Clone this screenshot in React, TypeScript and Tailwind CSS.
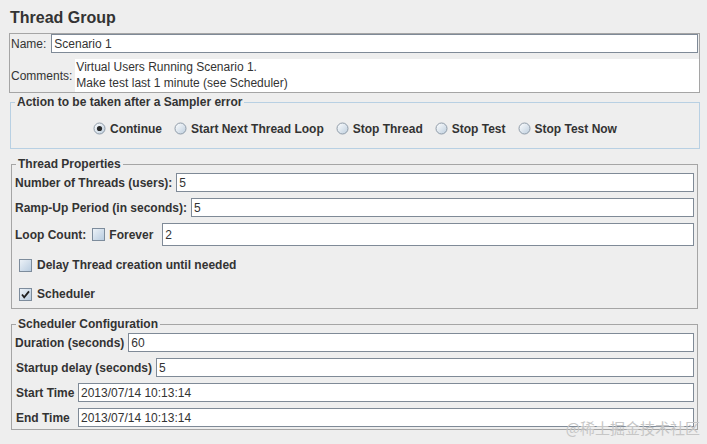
import React from 'react';

const TEXT = 'text-[#333333]';

function Radio({ checked }: { checked?: boolean }) {
  return (
    <svg width="13" height="13" viewBox="0 0 13 13" className="shrink-0">
      <defs>
        <linearGradient id="rg" x1="0" y1="0" x2="1" y2="1">
          <stop offset="0" stopColor="#ffffff" />
          <stop offset="1" stopColor="#bccddd" />
        </linearGradient>
      </defs>
      <circle cx="6.5" cy="6.5" r="5.5" fill="url(#rg)" stroke="#8f9ba8" />
      {checked && <circle cx="6.5" cy="6.5" r="2.6" fill="#2a2a2a" />}
    </svg>
  );
}

function Check({ checked }: { checked?: boolean }) {
  return (
    <svg width="13" height="13" viewBox="0 0 13 13" className="shrink-0">
      <defs>
        <linearGradient id="cg" x1="0" y1="0" x2="1" y2="1">
          <stop offset="0" stopColor="#eef3f8" />
          <stop offset="1" stopColor="#b7cbdf" />
        </linearGradient>
      </defs>
      <rect x="0.5" y="0.5" width="12" height="12" fill="url(#cg)" stroke="#7d8c9c" />
      {checked && (
        <path d="M3 6.5 L5.2 9.3 L10 3.4" fill="none" stroke="#1f1f1f" strokeWidth="1.8" />
      )}
    </svg>
  );
}

function Field({ value, tall }: { value: string; tall?: boolean }) {
  return (
    <div
      className={`flex-1 ${tall ? 'h-[23px]' : 'h-[19px]'} bg-white border border-[#7f8a97] flex items-center pl-[2px] text-[12px] font-normal ${TEXT}`}
    >
      {value}
    </div>
  );
}

function Group({ title, children, className }: { title: string; children: React.ReactNode; className?: string }) {
  return (
    <fieldset className={`border border-[#a5a5a5] ${className ?? ''}`}>
      <legend className={`ml-[4px] px-[2px] leading-[14px] text-[12px] font-bold ${TEXT}`}>{title}</legend>
      {children}
    </fieldset>
  );
}

function Row({ label, value, tall, labelW, className }: { label: string; value: string; tall?: boolean; labelW?: string; className?: string }) {
  return (
    <div className={`flex items-center gap-[4px] pl-[3px] pr-[3px] ${className ?? ''}`}>
      <span className={`text-[12px] font-bold whitespace-nowrap ${labelW ?? ''}`}>{label}</span>
      <Field value={value} tall={tall} />
    </div>
  );
}

export default function App() {
  const options = ['Continue', 'Start Next Thread Loop', 'Stop Thread', 'Stop Test', 'Stop Test Now'];

  return (
    <div className={`relative w-[707px] h-[444px] overflow-hidden bg-[#eeeeee] font-['Liberation_Sans',Arial,sans-serif] ${TEXT}`}>
      <div className="h-[33px] pl-[10px] pt-[8px] text-[16px] leading-[20px] font-bold">Thread Group</div>

      {/* name / comments */}
      <div className="ml-[9px] w-[691px] border border-[#a5a5a5]">
        <div className="flex items-center h-[19px] pl-[1px] pr-[1px]">
          <span className="text-[12px] mr-[5px]">Name:</span>
          <Field value="Scenario 1" />
        </div>
        <div className="flex items-center mt-[6px] h-[33px]">
          <span className="text-[12px] pl-[1px] mr-[3px]">Comments:</span>
          <div className="flex-1 h-full bg-white text-[12px] leading-[16px] pl-[1px] pt-0">
            <div>Virtual Users Running Scenario 1.</div>
            <div>Make test last 1 minute (see Scheduler)</div>
          </div>
        </div>
      </div>

      <fieldset className="mt-[2px] ml-[10px] w-[690px] border border-[#b8d0e3]">
        <legend className="ml-[4px] px-[2px] leading-[14px] text-[12px] font-bold">Action to be taken after a Sampler error</legend>
        <div className="h-[39px] flex items-center justify-center gap-[12px] text-[12px] font-bold">
          {options.map((o, i) => (
            <label key={o} className="flex items-center gap-[4px]">
              <Radio checked={i === 0} />
              <span>{o}</span>
            </label>
          ))}
        </div>
      </fieldset>

      <Group title="Thread Properties" className="mt-[8px] ml-[11px] w-[687px] pb-[4px]">
        <Row label="Number of Threads (users):" value="5" className="mt-[2px]" />
        <Row label="Ramp-Up Period (in seconds):" value="5" className="mt-[6px]" />
        <div className="flex items-center mt-[6px] pl-[3px] pr-[3px] text-[12px] font-bold">
          <span className="mr-[6px]">Loop Count:</span>
          <Check />
          <span className="ml-[4px] mr-[9px]">Forever</span>
          <Field value="2" tall />
        </div>
        <div className="flex items-center gap-[5px] h-[20px] mt-[9px] pl-[7px] text-[12px] font-bold">
          <Check />
          <span>Delay Thread creation until needed</span>
        </div>
        <div className="flex items-center gap-[5px] h-[20px] mt-[9px] pl-[7px] text-[12px] font-bold">
          <Check checked />
          <span>Scheduler</span>
        </div>
      </Group>

      <Group title="Scheduler Configuration" className="mt-[8px] ml-[11px] w-[687px] pb-[2px]">
        <Row label="Duration (seconds)" value="60" className="mt-[2px]" />
        <Row label="Startup delay (seconds)" value="5" className="mt-[6px] pl-[4px]" />
        <Row label="Start Time" value="2013/07/14 10:13:14" labelW="w-[58px]" className="mt-[6px] pl-[4px]" />
        <Row label="End Time" value="2013/07/14 10:13:14" labelW="w-[58px]" className="mt-[6px] pl-[4px]" />
      </Group>

      <div className="absolute right-[7px] bottom-[7px] text-[15px] leading-[18px] text-[#c6c6c6] font-['Noto_Sans_CJK_SC',sans-serif]">
        @稀土掘金技术社区
      </div>
    </div>
  );
}
